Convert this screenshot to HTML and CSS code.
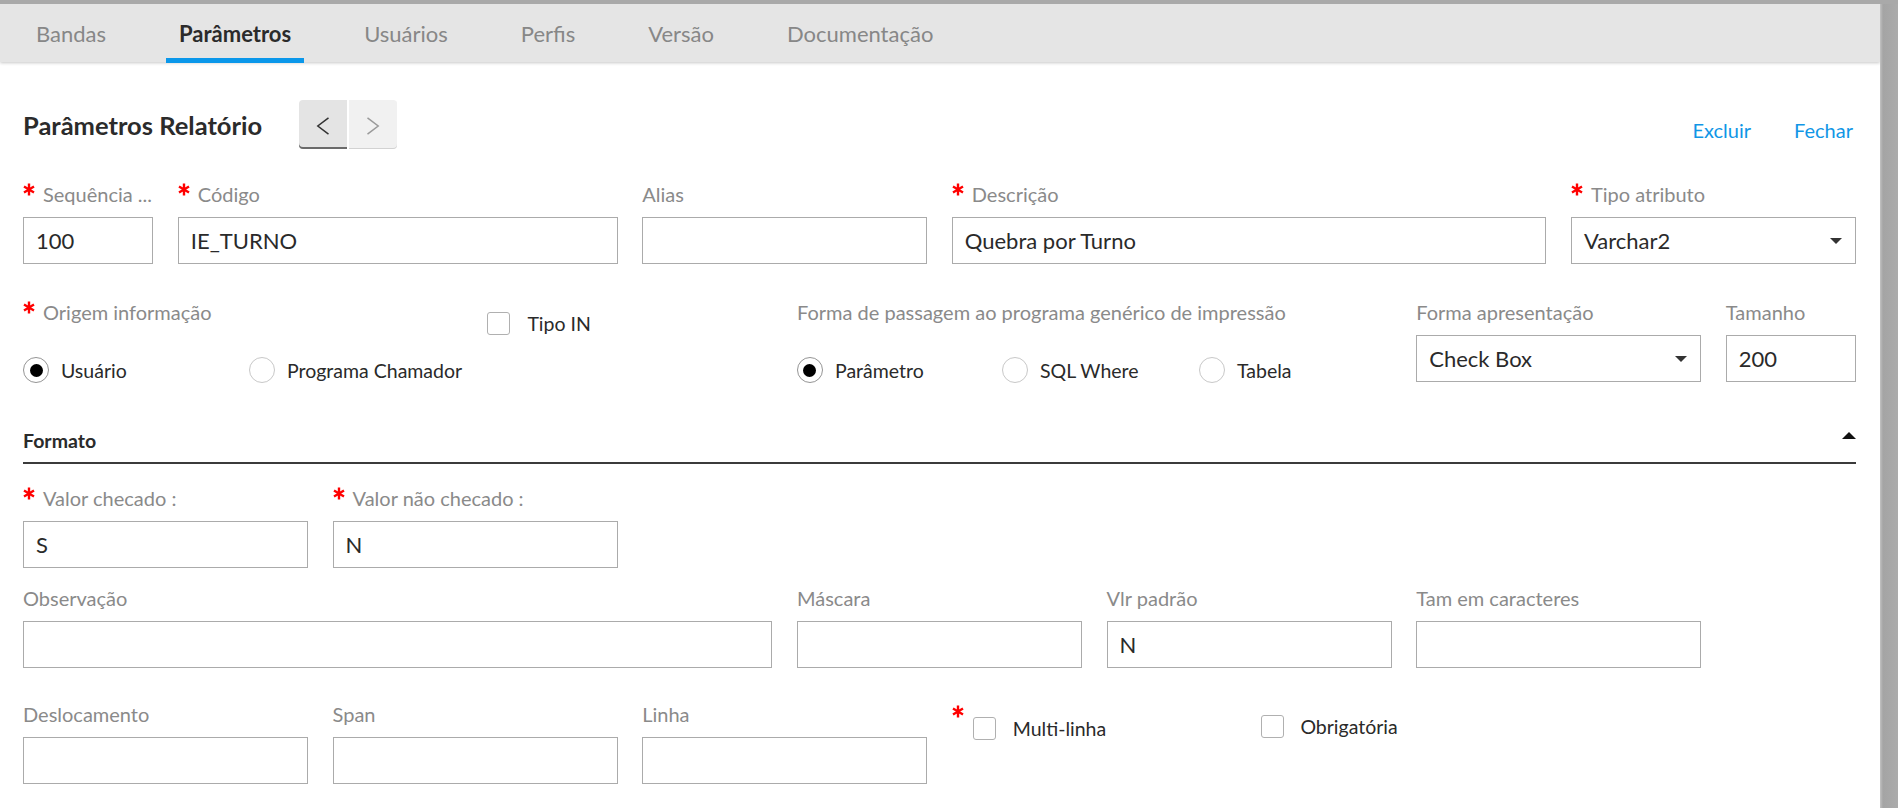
FILE: index.html
```html
<!DOCTYPE html>
<html lang="pt-BR">
<head>
<meta charset="utf-8">
<title>Parâmetros Relatório</title>
<link rel="stylesheet" href="styles.css">
</head>
<body>
<div class="frame">
  <div class="window">
    <nav class="tabs">
      <a class="tab">Bandas</a>
      <a class="tab active">Parâmetros</a>
      <a class="tab">Usuários</a>
      <a class="tab">Perfis</a>
      <a class="tab">Versão</a>
      <a class="tab">Documentação</a>
    </nav>
    <main class="content">
      <header class="page-head">
        <h1 class="page-title">Parâmetros Relatório</h1>
        <div class="pager">
          <button class="pg prev"><svg width="14" height="18" viewBox="0 0 14 18"><path d="M12.5 0.8L1.8 9L12.5 17.2" fill="none" stroke="#333" stroke-width="1.5"/></svg></button>
          <button class="pg next"><svg width="14" height="18" viewBox="0 0 14 18"><path d="M1.5 0.8L12.2 9L1.5 17.2" fill="none" stroke="#9a9a9a" stroke-width="1.5"/></svg></button>
        </div>
        <div class="actions"><a>Excluir</a><a>Fechar</a></div>
      </header>

      <div class="row r1">
        <div class="field s1">
          <div class="lbl"><svg class="ast" viewBox="0 0 12 13"><path d="M6 0.5V12.5M1 3.5L11 9.5M1 9.5L11 3.5"/></svg>Sequência ...</div>
          <input class="inp" type="text" value="100">
        </div>
        <div class="field s3">
          <div class="lbl"><svg class="ast" viewBox="0 0 12 13"><path d="M6 0.5V12.5M1 3.5L11 9.5M1 9.5L11 3.5"/></svg>Código</div>
          <input class="inp" type="text" value="IE_TURNO">
        </div>
        <div class="field s2">
          <div class="lbl">Alias</div>
          <input class="inp" type="text" value="">
        </div>
        <div class="field s4">
          <div class="lbl"><svg class="ast" viewBox="0 0 12 13"><path d="M6 0.5V12.5M1 3.5L11 9.5M1 9.5L11 3.5"/></svg>Descrição</div>
          <input class="inp" type="text" value="Quebra por Turno">
        </div>
        <div class="field s2">
          <div class="lbl"><svg class="ast" viewBox="0 0 12 13"><path d="M6 0.5V12.5M1 3.5L11 9.5M1 9.5L11 3.5"/></svg>Tipo atributo</div>
          <div class="sel"><span>Varchar2</span><i class="caret"></i></div>
        </div>
      </div>

      <div class="row r2">
        <div class="field s3">
          <div class="lbl"><svg class="ast" viewBox="0 0 12 13"><path d="M6 0.5V12.5M1 3.5L11 9.5M1 9.5L11 3.5"/></svg>Origem informação</div>
          <div class="opts opts-origem">
            <label class="opt"><span class="radio on"></span>Usuário</label>
            <label class="opt"><span class="radio"></span>Programa Chamador</label>
          </div>
        </div>
        <div class="field s2">
          <label class="check check-tipo"><span class="chk"></span>Tipo IN</label>
        </div>
        <div class="field s4">
          <div class="lbl">Forma de passagem ao programa genérico de impressão</div>
          <div class="opts opts-forma">
            <label class="opt"><span class="radio on"></span>Parâmetro</label>
            <label class="opt"><span class="radio"></span>SQL Where</label>
            <label class="opt"><span class="radio"></span>Tabela</label>
          </div>
        </div>
        <div class="field s2">
          <div class="lbl">Forma apresentação</div>
          <div class="sel"><span>Check Box</span><i class="caret"></i></div>
        </div>
        <div class="field s1">
          <div class="lbl">Tamanho</div>
          <input class="inp" type="text" value="200">
        </div>
      </div>

      <div class="section-head">
        <h2>Formato</h2>
        <i class="caret-up"></i>
      </div>

      <div class="row f1">
        <div class="field s2">
          <div class="lbl"><svg class="ast" viewBox="0 0 12 13"><path d="M6 0.5V12.5M1 3.5L11 9.5M1 9.5L11 3.5"/></svg>Valor checado :</div>
          <input class="inp" type="text" value="S">
        </div>
        <div class="field s2">
          <div class="lbl"><svg class="ast" viewBox="0 0 12 13"><path d="M6 0.5V12.5M1 3.5L11 9.5M1 9.5L11 3.5"/></svg>Valor não checado :</div>
          <input class="inp" type="text" value="N">
        </div>
      </div>

      <div class="row f2">
        <div class="field s5">
          <div class="lbl">Observação</div>
          <input class="inp" type="text" value="">
        </div>
        <div class="field s2">
          <div class="lbl">Máscara</div>
          <input class="inp" type="text" value="">
        </div>
        <div class="field s2">
          <div class="lbl">Vlr padrão</div>
          <input class="inp" type="text" value="N">
        </div>
        <div class="field s2">
          <div class="lbl">Tam em caracteres</div>
          <input class="inp" type="text" value="">
        </div>
      </div>

      <div class="row f3">
        <div class="field s2">
          <div class="lbl">Deslocamento</div>
          <input class="inp" type="text" value="">
        </div>
        <div class="field s2">
          <div class="lbl">Span</div>
          <input class="inp" type="text" value="">
        </div>
        <div class="field s2">
          <div class="lbl">Linha</div>
          <input class="inp" type="text" value="">
        </div>
        <div class="field s2 multi">
          <svg class="ast" viewBox="0 0 12 13"><path d="M6 0.5V12.5M1 3.5L11 9.5M1 9.5L11 3.5"/></svg>
          <label class="check check-multi"><span class="chk"></span>Multi-linha</label>
        </div>
        <div class="field s2">
          <label class="check check-obrig"><span class="chk"></span>Obrigatória</label>
        </div>
      </div>
    </main>
  </div>
  <div class="edge"></div>
</div>
</body>
</html>
```

FILE: styles.css
```css
html, body {
  margin: 0;
  padding: 0;
}

body {
  background: #a9a9a9;
  font-family: Lato, "Liberation Sans", sans-serif;
  color: #2a2a2a;
}

.frame {
  display: flex;
  height: 808px;
  padding-top: 4px;
  box-sizing: border-box;
  background: #a9a9a9;
  overflow: hidden;
}

.window {
  flex: 1;
  background: #fff;
  overflow: hidden;
}

.edge {
  width: 18px;
  background: linear-gradient(to right, #c2c2c2 0, #a4a4a4 3px, #ababab 100%);
}

/* Tabs */
.tabs {
  position: relative;
  display: flex;
  gap: 47px;
  height: 58px;
  padding-left: 23px;
  background: #e5e5e5;
  box-shadow: 0 1px 3px rgba(0, 0, 0, 0.22);
}

.tab {
  position: relative;
  display: flex;
  align-items: center;
  padding: 0 13px;
  font-size: 22px;
  color: #878787;
}

.tab.active {
  color: #2b2b2b;
  font-weight: 700;
}

.tab.active::after {
  content: "";
  position: absolute;
  left: 0;
  right: 0;
  bottom: -1px;
  height: 5px;
  background: #0a97ea;
}

/* Content */
.content {
  padding: 38px 24px 0 23px;
}

.page-head {
  display: flex;
  align-items: center;
  height: 49px;
}

.page-title {
  width: 276px;
  margin: 0;
  font-size: 25.5px;
  font-weight: 700;
  color: #2b2b2b;
  white-space: nowrap;
}

.pager {
  display: flex;
  gap: 2px;
}

.pg {
  display: flex;
  align-items: center;
  justify-content: center;
  width: 48px;
  height: 49px;
  padding: 2px 0 0;
  border: 0;
}

.pg.prev {
  background: #e4e4e4;
  border-radius: 4px 0 0 4px;
  box-shadow: inset 0 -2px 0 #6a6a6a;
}

.pg.next {
  background: #f1f1f1;
  border-radius: 0 4px 4px 0;
  box-shadow: inset 0 -1px 0 #d2d2d2;
}

.actions {
  display: flex;
  gap: 43px;
  margin-left: auto;
  padding: 10px 3px 0 0;
  font-size: 20px;
  color: #1196e6;
}

/* Grid rows */
.row {
  display: grid;
  grid-template-columns: repeat(12, 1fr);
  column-gap: 24.6px;
}

.s1 { grid-column: span 1; }
.s2 { grid-column: span 2; }
.s3 { grid-column: span 3; }
.s4 { grid-column: span 4; }
.s5 { grid-column: span 5; }

.r1 { margin-top: 33px; }
.r2 { margin-top: 36px; }
.f1 { margin-top: 22px; }
.f2 { margin-top: 18px; }
.f3 { margin-top: 34px; }

.field {
  min-width: 0;
}

.lbl {
  display: flex;
  align-items: center;
  height: 24px;
  margin-bottom: 11px;
  font-size: 20px;
  color: #8a8a8a;
  white-space: nowrap;
}

.ast {
  flex: none;
  align-self: flex-start;
  width: 12px;
  height: 13px;
  margin: 1px 8px 0 0;
  fill: none;
  stroke: #ff0000;
  stroke-width: 2.4;
}

.inp,
.sel {
  display: block;
  width: 100%;
  height: 47px;
  box-sizing: border-box;
  margin: 0;
  padding: 0 12px;
  border: 1px solid #ababab;
  border-radius: 0;
  background: #fff;
  font-family: inherit;
  font-size: 22px;
  color: #2a2a2a;
  outline: none;
}

.sel {
  display: flex;
  align-items: center;
  justify-content: space-between;
  padding-right: 13px;
}

.caret {
  width: 0;
  height: 0;
  border-left: 6px solid transparent;
  border-right: 6px solid transparent;
  border-top: 6px solid #333;
}

/* Radios and checkboxes */
.opts {
  display: grid;
  margin-top: 33px;
}

.opts-origem { grid-template-columns: 226px auto; }
.opts-forma { grid-template-columns: 205px 197px auto; }

.opt {
  display: flex;
  align-items: center;
  gap: 12px;
  height: 26px;
  font-size: 19.5px;
  color: #2a2a2a;
  white-space: nowrap;
}

.radio {
  display: flex;
  align-items: center;
  justify-content: center;
  flex: none;
  width: 26px;
  height: 26px;
  box-sizing: border-box;
  border: 1px solid #c8c8c8;
  border-radius: 50%;
  background: #fff;
}

.radio.on {
  border-color: #959595;
}

.radio.on::after {
  content: "";
  width: 13px;
  height: 13px;
  border-radius: 50%;
  background: #000;
}

.check {
  display: flex;
  align-items: center;
  gap: 17px;
  font-size: 19.5px;
  color: #2a2a2a;
  white-space: nowrap;
}

.chk {
  flex: none;
  width: 23px;
  height: 23px;
  box-sizing: border-box;
  border: 1px solid #b0b0b0;
  border-radius: 3px;
  background: #fff;
}

.check-tipo { margin-top: 12px; }

.multi {
  display: flex;
  align-items: flex-start;
}

.multi .ast {
  margin: 3px 0 0 0;
}

.check-multi {
  margin: 15px 0 0 9px;
}

.check-obrig {
  margin-top: 13px;
  gap: 16px;
}

/* Section */
.section-head {
  display: flex;
  justify-content: space-between;
  align-items: flex-start;
  margin-top: 46px;
  padding-bottom: 9px;
  border-bottom: 2px solid #3b3b3b;
}

.section-head h2 {
  margin: 0;
  font-size: 19.5px;
  line-height: 24px;
  font-weight: 700;
  color: #2b2b2b;
}

.caret-up {
  width: 0;
  height: 0;
  margin-top: 3px;
  border-left: 7px solid transparent;
  border-right: 7px solid transparent;
  border-bottom: 7px solid #111;
}
```
